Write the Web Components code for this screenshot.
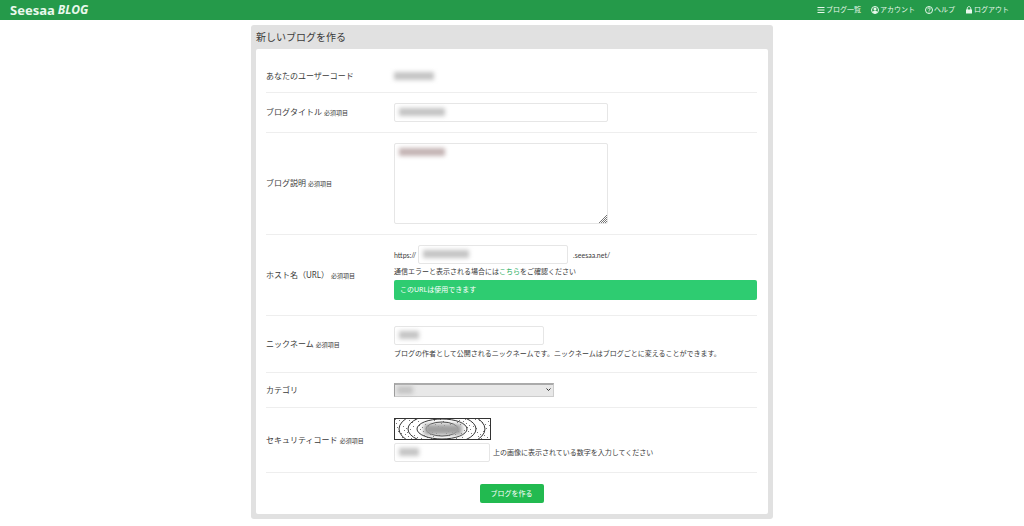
<!DOCTYPE html>
<html lang="ja">
<head>
<meta charset="utf-8">
<title>新しいブログを作る</title>
<style>
  body {
    margin: 0;
    background: #fff;
    color: #3a3a3a;
    font-family: "Noto Sans", "Noto Sans CJK JP", sans-serif;
    font-size: 7px;
    line-height: 12px;
  }
</style>
</head>
<body>
<blog-header></blog-header>
<blog-panel heading="新しいブログを作る">
  <form-row label="あなたのユーザーコード">
    <masked-text style="--w: 40px"></masked-text>
  </form-row>
  <form-row label="ブログタイトル" required>
    <text-field label="ブログタイトル" style="--field: 214px; --w: 46px"></text-field>
  </form-row>
  <form-row label="ブログ説明" required>
    <text-field label="ブログ説明" multiline style="--field: 214px; --w: 46px; --mask: #c4b4b4"></text-field>
  </form-row>
  <form-row label="ホスト名（URL）" required>
    <host-field></host-field>
  </form-row>
  <form-row label="ニックネーム" required>
    <nickname-field></nickname-field>
  </form-row>
  <form-row label="カテゴリ">
    <category-select></category-select>
  </form-row>
  <form-row label="セキュリティコード" required>
    <security-code></security-code>
  </form-row>
  <submit-button>ブログを作る</submit-button>
</blog-panel>

<script>
  (function blogForm(customElements) {
    class BlogHeader extends HTMLElement {
      constructor() {
        super();
        this.attachShadow({mode: 'open'}).innerHTML = `
          <style>
            :host {
              display: block;
              background: #259a4a;
              color: #e9f8ec;
            }

            header {
              display: flex;
              justify-content: space-between;
              align-items: center;
              height: 20px;
              padding: 0 15px 0 10px;
            }

            a {
              color: inherit;
              text-decoration: none;
              display: flex;
              align-items: center;
              gap: 1px;
            }

            .logo {
              font-weight: bold;
              font-size: 13px;
              line-height: 20px;
              gap: 3px;
            }

            .logo em {
              font-size: 12px;
            }

            nav {
              display: flex;
              gap: 10px;
            }

            svg {
              width: 8px;
              height: 8px;
              fill: none;
              stroke: currentColor;
              stroke-width: 2;
            }

            .solid {
              fill: currentColor;
              stroke: none;
            }
          </style>
          <header>
            <a class="logo" href="#"><span>Seesaa</span><em>BLOG</em></a>
            <nav>
              <a href="#"><svg viewBox="0 0 16 16"><path d="M1 3h14M1 8h14M1 13h14"/></svg>ブログ一覧</a>
              <a href="#"><svg viewBox="0 0 16 16"><circle cx="8" cy="8" r="7"/><circle class="solid" cx="8" cy="6" r="3"/><path class="solid" d="M3 13c0-5 10-5 10 0l-5 2z"/></svg>アカウント</a>
              <a href="#"><svg viewBox="0 0 16 16"><circle cx="8" cy="8" r="7"/><path d="M5.500 6.500c0-3.500 5-3.500 5-.5 0 2-2.500 1.500-2.500 3.500M8 11v2"/></svg>ヘルプ</a>
              <a href="#"><svg viewBox="0 0 16 16"><path d="M4.500 8V5c0-5 7-5 7 0v3"/><path class="solid" d="M2 7h12v8H2z"/></svg>ログアウト</a>
            </nav>
          </header>
        `;
      }
    }
    customElements.define('blog-header', BlogHeader);

    class BlogPanel extends HTMLElement {
      constructor() {
        super();
        this.attachShadow({mode: 'open'}).innerHTML = `
          <style>
            :host {
              display: block;
              max-width: 512px;
              margin: 5px auto 8px;
              padding: 0 5px 5px;
              background: #e1e1e1;
              border-radius: 3px;
            }

            h1 {
              margin: 0;
              font-size: 10px;
              font-weight: normal;
              line-height: 24px;
            }

            form {
              background: #fff;
              border-radius: 2px;
              padding: 11px 11px 11px 10px;
            }
          </style>
          <h1></h1>
          <form><slot></slot></form>
        `;
      }

      connectedCallback() {
        this.shadowRoot.querySelector('h1').textContent = this.getAttribute('heading');
      }
    }
    customElements.define('blog-panel', BlogPanel);

    class FormRow extends HTMLElement {
      constructor() {
        super();
        this.attachShadow({mode: 'open'}).innerHTML = `
          <style>
            :host {
              display: grid;
              grid-template-columns: 128px 1fr;
              align-items: center;
              padding: 10px 0;
              border-bottom: 1px solid #eee;
            }

            .title {
              font-size: 8px;
            }

            small {
              font-size: 6px;
            }
          </style>
          <div class="title"><span></span> <small hidden>必須項目</small></div>
          <div><slot></slot></div>
        `;
      }

      connectedCallback() {
        this.shadowRoot.querySelector('span').textContent = this.getAttribute('label');
        this.shadowRoot.querySelector('small').hidden = !this.hasAttribute('required');
      }
    }
    customElements.define('form-row', FormRow);

    // Smudge that hides a private value
    class MaskedText extends HTMLElement {
      constructor() {
        super();
        this.attachShadow({mode: 'open'}).innerHTML = `
          <style>
            :host {
              display: block;
              width: var(--w, 40px);
              height: 8px;
              background: var(--mask, #c4c4c4);
              filter: blur(2px);
              pointer-events: none;
            }
          </style>
        `;
      }
    }
    customElements.define('masked-text', MaskedText);

    class TextField extends HTMLElement {
      connectedCallback() {
        const label = this.getAttribute('label');
        const control = this.hasAttribute('multiline')
          ? `<textarea aria-label="${label}"></textarea>`
          : `<input type="text" aria-label="${label}">`;

        this.attachShadow({mode: 'open'}).innerHTML = `
          <style>
            :host {
              display: block;
              position: relative;
              width: var(--field);
            }

            input, textarea {
              display: block;
              box-sizing: border-box;
              width: 100%;
              height: 19px;
              margin: 0;
              padding: 2px 5px;
              border: 1px solid #e6e6e6;
              border-radius: 2px;
              background: #fff;
              font: inherit;
            }

            textarea {
              height: 81px;
              resize: none;
            }

            masked-text {
              position: absolute;
              left: 5px;
              top: 5px;
            }

            svg {
              position: absolute;
              right: 1px;
              bottom: 1px;
              width: 8px;
              height: 8px;
              stroke: #777;
            }
          </style>
          ${control}
          <masked-text></masked-text>
          ${this.hasAttribute('multiline') ? '<svg viewBox="0 0 8 8"><path d="M0 8L8 0M2 8L8 2M4 8L8 4M6 8L8 6"/></svg>' : ''}
        `;
      }
    }
    customElements.define('text-field', TextField);

    class HostField extends HTMLElement {
      constructor() {
        super();
        this.attachShadow({mode: 'open'}).innerHTML = `
          <style>
            :host {
              display: block;
              padding-bottom: 5px;
            }

            .url {
              display: flex;
              align-items: center;
              gap: 2px;
              font-family: Lato, sans-serif;
            }

            .url span:last-child {
              margin-left: 3px;
            }

            p {
              margin: 2px 0;
            }

            a {
              color: #27ae60;
              text-decoration: none;
            }

            .ok {
              background: #2ecc71;
              color: #fff;
              border-radius: 2px;
              padding: 4px 6px;
            }
          </style>
          <div class="url">
            <span>https://</span>
            <text-field label="ホスト名（URL）" style="--field: 150px; --w: 46px"></text-field>
            <span>.seesaa.net/</span>
          </div>
          <p>通信エラーと表示される場合には<a href="#">こちら</a>をご確認ください</p>
          <div class="ok">このURLは使用できます</div>
        `;
      }
    }
    customElements.define('host-field', HostField);

    class NicknameField extends HTMLElement {
      constructor() {
        super();
        this.attachShadow({mode: 'open'}).innerHTML = `
          <style>
            :host {
              display: block;
            }

            p {
              margin: 3px 0 2px;
            }
          </style>
          <text-field label="ニックネーム" style="--field: 150px; --w: 20px"></text-field>
          <p>ブログの作者として公開されるニックネームです。ニックネームはブログごとに変えることができます。</p>
        `;
      }
    }
    customElements.define('nickname-field', NicknameField);

    class CategorySelect extends HTMLElement {
      constructor() {
        super();
        this.attachShadow({mode: 'open'}).innerHTML = `
          <style>
            :host {
              display: block;
              position: relative;
              width: 160px;
            }

            select {
              display: block;
              appearance: none;
              width: 100%;
              height: 14px;
              border: 1px solid #ccc;
              border-top: 2px solid #aaa;
              border-left-color: #999;
              border-radius: 0;
              background: #e8e8e8;
              font: inherit;
            }

            masked-text {
              --w: 16px;
              position: absolute;
              left: 3px;
              top: 3px;
            }

            svg {
              position: absolute;
              right: 3px;
              top: 5px;
              width: 5px;
              height: 4px;
              fill: none;
              stroke: #333;
              pointer-events: none;
            }
          </style>
          <select aria-label="カテゴリ"><option></option></select>
          <masked-text></masked-text>
          <svg viewBox="0 0 5 4"><path d="M.5 .5l2 2 2-2"/></svg>
        `;
      }
    }
    customElements.define('category-select', CategorySelect);

    class SecurityCode extends HTMLElement {
      constructor() {
        super();
        this.attachShadow({mode: 'open'}).innerHTML = `
          <style>
            :host {
              display: block;
            }

            .captcha {
              display: block;
              width: 97px;
              height: 22px;
              margin-bottom: 3px;
            }

            .entry {
              display: flex;
              align-items: center;
              gap: 3px;
            }

            .blur {
              filter: blur(2px);
            }
          </style>
          <svg class="captcha" viewBox="0 0 97 22" fill="none" stroke="#333">
            <g class="noise" fill="#777" stroke="none"></g>
            <ellipse cx="48" cy="11" rx="16" ry="7"/>
            <ellipse cx="48" cy="11" rx="25" ry="10"/>
            <ellipse cx="48" cy="11" rx="34" ry="15"/>
            <ellipse cx="48" cy="11" rx="43" ry="19"/>
            <rect class="blur" x="30" y="6" width="38" height="11" fill="#a0a0a0" stroke="none"/>
            <rect x=".5" y=".5" width="96" height="21"/>
          </svg>
          <div class="entry">
            <text-field label="セキュリティコード" style="--field: 96px; --w: 20px"></text-field>
            <span>上の画像に表示されている数字を入力してください</span>
          </div>
        `;

        let dots = '';
        for (let i = 0; i < 90; i++) {
          dots += `<rect x="${(i * 37) % 95 + 1}" y="${(i * 13 + (i >> 3) * 5) % 20 + 1}" width="1" height="1"/>`;
        }
        this.shadowRoot.querySelector('.noise').innerHTML = dots;
      }
    }
    customElements.define('security-code', SecurityCode);

    class SubmitButton extends HTMLElement {
      constructor() {
        super();
        this.attachShadow({mode: 'open'}).innerHTML = `
          <style>
            :host {
              display: flex;
              justify-content: center;
              padding-top: 11px;
            }

            button {
              border: 0;
              border-radius: 2px;
              background: #22ba50;
              color: #fff;
              width: 64px;
              height: 19px;
              padding: 0;
              font: inherit;
              cursor: pointer;
            }
          </style>
          <button type="submit"><slot></slot></button>
        `;
      }
    }
    customElements.define('submit-button', SubmitButton);
  })(window.customElements);
</script>
</body>
</html>
